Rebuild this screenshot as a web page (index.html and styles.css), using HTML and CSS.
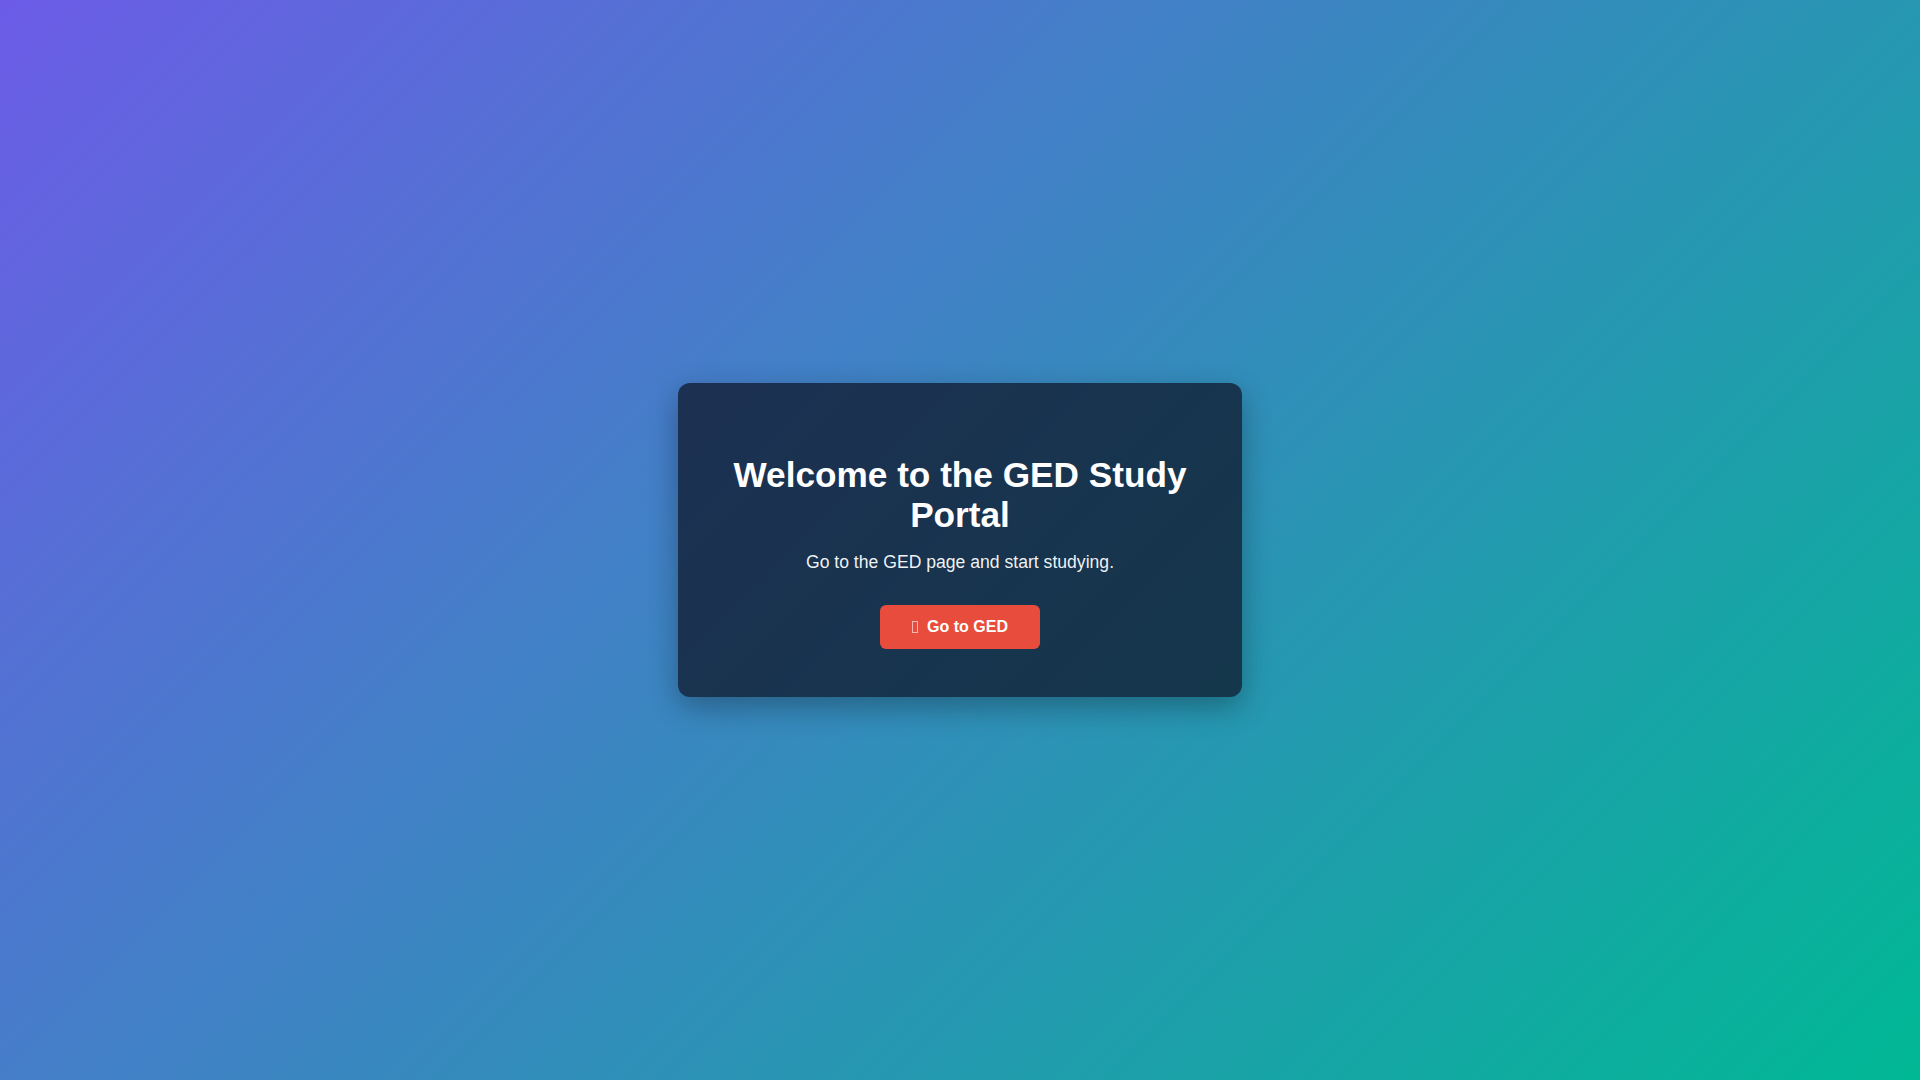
FILE: index.html
```html
<!DOCTYPE html>
<html lang="en">
<head>
<meta charset="utf-8">
<title>GED Study Portal</title>
<link rel="stylesheet" href="styles.css">
</head>
<body>
<main class="page">
  <section class="card">
    <h1 class="card-title">Welcome to the GED Study Portal</h1>
    <p class="card-text">Go to the GED page and start studying.</p>
    <a class="btn" href="#"><span class="btn-icon" aria-hidden="true"></span>Go to GED</a>
  </section>
</main>
</body>
</html>
```
FILE: styles.css
```css
html, body {
  margin: 0;
  padding: 0;
  height: 100%;
}

body {
  font-family: "Liberation Sans", Arial, sans-serif;
  background: linear-gradient(135deg, #6c5ce7 0%, #00b894 100%);
  color: #fff;
}

.page {
  min-height: 100vh;
  display: flex;
  align-items: center;
  justify-content: center;
}

.card {
  width: 468px;
  padding: 48px;
  background: rgba(15, 23, 42, 0.75);
  border-radius: 12px;
  box-shadow: 0 10px 30px rgba(0, 0, 0, 0.3);
  text-align: center;
}

.card-title {
  font-size: 35.2px;
  font-weight: 700;
  margin: 23.6px 0 17px;
  color: #fff;
}

.card-text {
  font-size: 17.6px;
  margin: 0 0 32px;
  color: rgba(255, 255, 255, 0.95);
}

.btn {
  display: inline-flex;
  align-items: center;
  padding: 12.8px 32px;
  background: #e74c3c;
  color: #fff;
  font-size: 16px;
  font-weight: 700;
  text-decoration: none;
  border-radius: 6px;
  line-height: 18.4px;
}

.btn-icon {
  display: inline-block;
  width: 4px;
  height: 10px;
  border: 1px solid rgba(255, 255, 255, 0.6);
  margin-right: 9px;
}
```
